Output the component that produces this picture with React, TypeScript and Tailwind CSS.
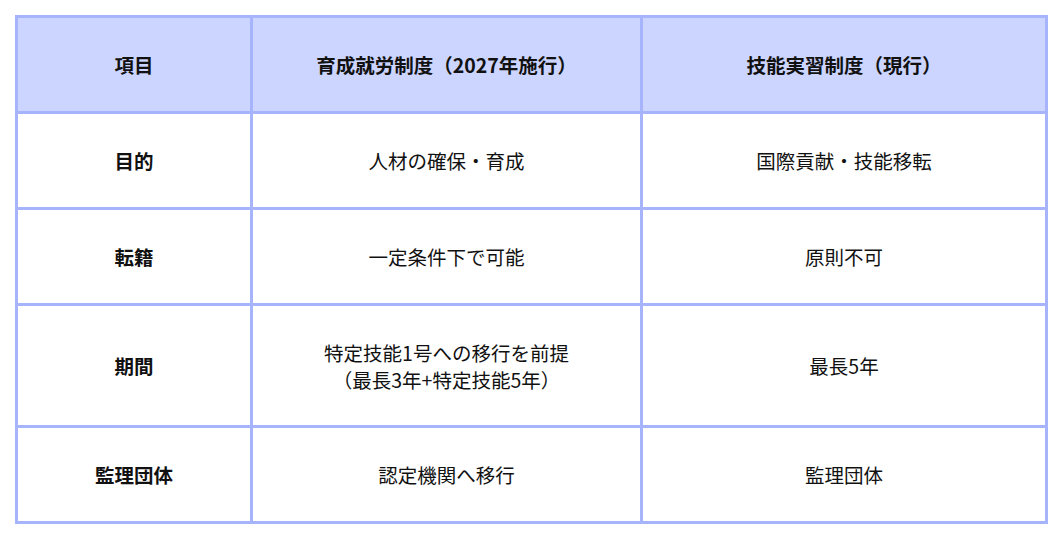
import React from "react";

type Row = {
  label: string;
  ikusei: string[];
  ginou: string;
};

const rows: Row[] = [
  { label: "目的", ikusei: ["人材の確保・育成"], ginou: "国際貢献・技能移転" },
  { label: "転籍", ikusei: ["一定条件下で可能"], ginou: "原則不可" },
  {
    label: "期間",
    ikusei: ["特定技能1号への移行を前提", "（最長3年+特定技能5年）"],
    ginou: "最長5年",
  },
  { label: "監理団体", ikusei: ["認定機関へ移行"], ginou: "監理団体" },
];

const cell =
  "flex flex-col items-center justify-center text-center py-[32.5px] px-4 leading-[28px]";

export default function App() {
  return (
    <div
      className="w-full bg-white p-[15px] text-[19.5px] text-[#111]"
      style={{ fontFamily: '"Noto Sans CJK JP", "Noto Sans", sans-serif' }}
    >
      <div className="grid grid-cols-[232px_387px_402px] gap-[3px] bg-[#a5b4fc] p-[3px]">
        <div className={`${cell} bg-[#ccd5ff] font-bold`}>項目</div>
        <div className={`${cell} bg-[#ccd5ff] font-bold`}>
          育成就労制度（2027年施行）
        </div>
        <div className={`${cell} bg-[#ccd5ff] font-bold`}>
          技能実習制度（現行）
        </div>

        {rows.map((r) => (
          <React.Fragment key={r.label}>
            <div className={`${cell} bg-white font-bold`}>{r.label}</div>
            <div className={`${cell} bg-white`}>
              {r.ikusei.map((line) => (
                <span key={line} className="leading-[27px]">
                  {line}
                </span>
              ))}
            </div>
            <div className={`${cell} bg-white`}>{r.ginou}</div>
          </React.Fragment>
        ))}
      </div>
    </div>
  );
}
